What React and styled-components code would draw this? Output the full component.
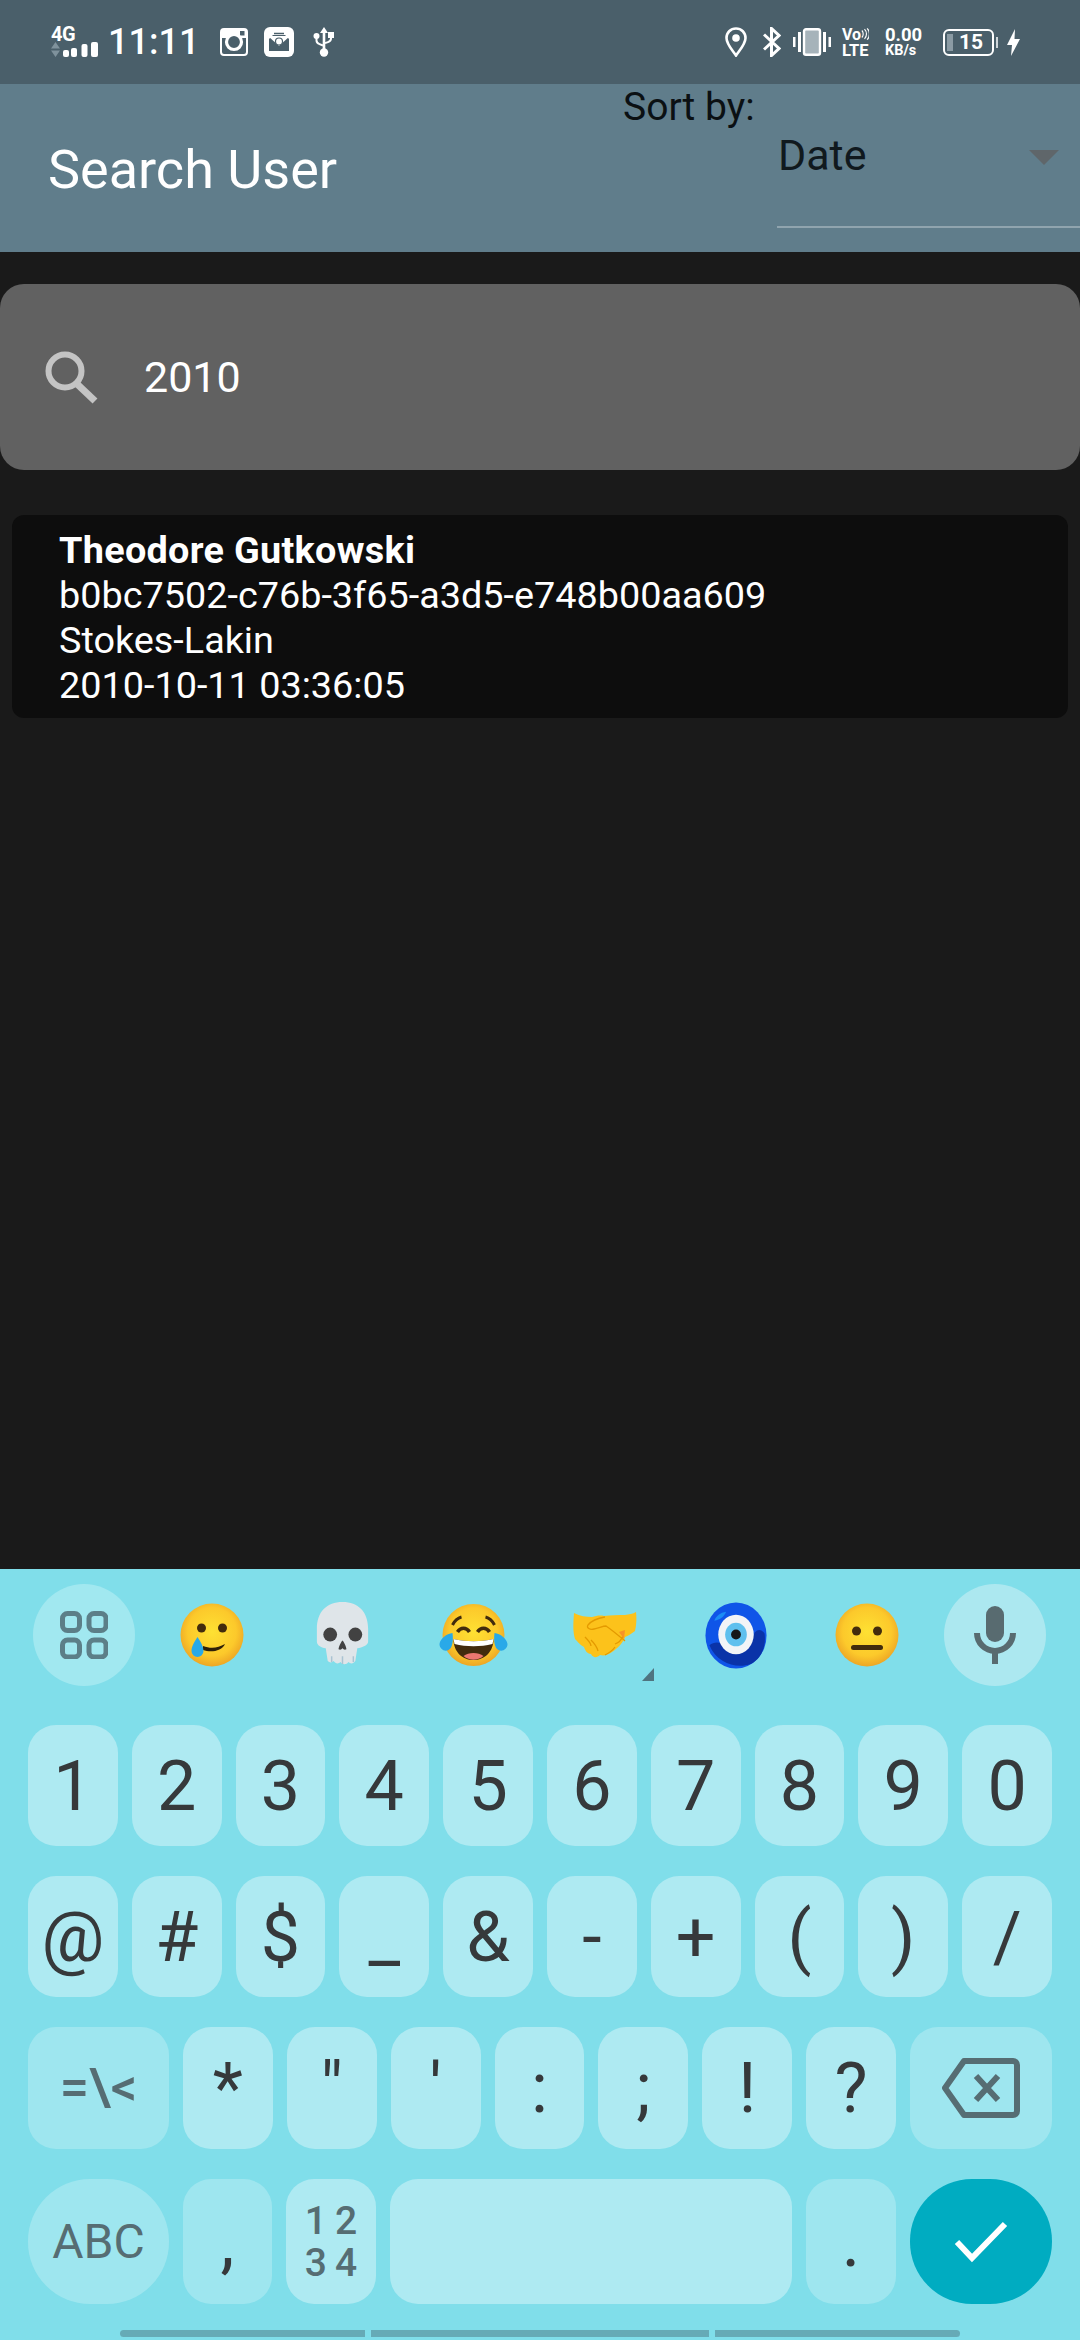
import React from "react";
import styled, { createGlobalStyle } from "styled-components";

const GlobalStyle = createGlobalStyle`
  html, body {
    margin: 0;
    padding: 0;
    background: #1a1a1a;
  }
  body {
    font-family: Roboto, "Liberation Sans", sans-serif;
  }
`;

const Page = styled.div`
  width: 1080px;
  height: 2340px;
  display: flex;
  flex-direction: column;
  overflow: hidden;
  background: #1a1a1a;
`;

const StatusBar = styled.div`
  height: 84px;
  flex-shrink: 0;
  display: flex;
  align-items: center;
  justify-content: space-between;
  padding: 0 60px 0 51px;
  background: #4a5f6a;
  color: #fff;
`;

const StatusGroup = styled.div`
  display: flex;
  align-items: center;
  height: 30px;
`;

const Network = styled.div`
  width: 47px;
  height: 30px;
  display: flex;
  flex-direction: column;
`;

const NetworkLabel = styled.span`
  font-size: 20px;
  line-height: 15px;
  font-weight: 700;
  letter-spacing: -0.5px;
`;

const Clock = styled.span`
  font-size: 36px;
  line-height: 30px;
  font-weight: 500;
  margin: 0 21px 0 10px;
`;

const StatusIcon = styled.svg`
  display: block;
  flex-shrink: 0;
  margin-right: ${(p) => p.$gap || 0}px;
`;

const StackedText = styled.div`
  width: ${(p) => p.$width}px;
  flex-shrink: 0;
  display: flex;
  flex-direction: column;
  font-weight: 700;
  margin-right: ${(p) => p.$gap || 0}px;
`;

const StackedLine = styled.span`
  display: flex;
  align-items: flex-start;
  font-size: ${(p) => p.$size}px;
  line-height: ${(p) => p.$line}px;
`;

const Battery = styled.div`
  position: relative;
  width: 51px;
  height: 27px;
  box-sizing: border-box;
  border: 2px solid #fff;
  border-radius: 6px;
  display: flex;
  align-items: center;
  padding-left: 2px;
  margin-right: 13px;
  &::after {
    content: "";
    position: absolute;
    right: -6px;
    top: 6px;
    width: 2px;
    height: 11px;
    background: #cfd6da;
  }
`;

const BatteryFill = styled.div`
  width: 6px;
  height: 17px;
  background: #8b9ba4;
  margin-right: 6px;
`;

const BatteryText = styled.span`
  font-size: 21px;
  font-weight: 700;
  line-height: 23px;
`;

const AppBar = styled.div`
  height: 168px;
  flex-shrink: 0;
  display: flex;
  justify-content: space-between;
  background: #607d8b;
`;

const Title = styled.h1`
  margin: 4px 0 0 48px;
  align-self: center;
  font-size: 54px;
  line-height: 60px;
  font-weight: 400;
  color: #fff;
`;

const SortBlock = styled.div`
  width: 457px;
  display: flex;
  flex-direction: column;
`;

const SortLabel = styled.span`
  font-size: 39px;
  line-height: 44px;
  margin-top: 1px;
  color: #0b1013;
`;

const Dropdown = styled.div`
  align-self: flex-end;
  width: 303px;
  height: 99px;
  box-sizing: border-box;
  padding: 0 21px 45px 1px;
  display: flex;
  align-items: center;
  justify-content: space-between;
  border-bottom: 2px solid #90a4ae;
`;

const DropdownValue = styled.span`
  font-size: 43px;
  line-height: 50px;
  color: #10191e;
`;

const DropdownArrow = styled.span`
  width: 0;
  height: 0;
  margin-top: 4px;
  border-left: 15px solid transparent;
  border-right: 15px solid transparent;
  border-top: 15px solid #5f666a;
`;

const Content = styled.main`
  flex: 1;
  padding-top: 32px;
`;

const SearchBar = styled.div`
  height: 186px;
  display: flex;
  align-items: center;
  gap: 46px;
  padding-left: 44px;
  border-radius: 24px;
  background: #616161;
`;

const SearchText = styled.span`
  font-size: 43px;
  line-height: 50px;
  color: #fff;
`;

const ResultCard = styled.div`
  margin: 45px 12px 0;
  padding: 13px 47px 10px;
  border-radius: 12px;
  background: #0d0d0d;
  color: #fff;
  font-size: 37.800px;
  line-height: 45px;
`;

const ResultName = styled.div`
  font-weight: 700;
  letter-spacing: 0.3px;
`;

const Keyboard = styled.div`
  height: 771px;
  flex-shrink: 0;
  box-sizing: border-box;
  padding-top: 15px;
  background: #80deea;
`;

const Suggestions = styled.div`
  display: flex;
  align-items: center;
  height: 102px;
  padding-left: 33px;
  margin-bottom: 39px;
`;

const RoundButton = styled.div`
  width: 102px;
  height: 102px;
  flex-shrink: 0;
  border-radius: 50%;
  display: flex;
  align-items: center;
  justify-content: center;
  background: ${(p) => p.$bg};
  margin-left: ${(p) => p.$left || 0}px;
`;

const EmojiCell = styled.div`
  position: relative;
  width: 131px;
  display: flex;
  justify-content: center;
  flex-shrink: 0;
  margin-left: ${(p) => p.$left || 0}px;
`;

const MoreMark = styled.span`
  position: absolute;
  right: 16px;
  bottom: -23px;
  width: 0;
  height: 0;
  border-bottom: 13px solid #4f7480;
  border-left: 12px solid transparent;
`;

const KeyRow = styled.div`
  display: grid;
  grid-template-columns: ${(p) => p.$columns};
  gap: 14px;
  height: ${(p) => p.$height}px;
  padding: 0 28px;
  margin-bottom: 30px;
`;

const Key = styled.div`
  display: flex;
  align-items: center;
  justify-content: center;
  border-radius: 28px;
  background: ${(p) => p.$bg || "#aeeaf2"};
  color: #36393b;
  font-size: 70px;
  font-weight: 400;
  line-height: 1;
`;

const LabelKey = styled(Key)`
  color: #566d73;
  font-size: ${(p) => p.$size}px;
  font-weight: ${(p) => p.$weight || 500};
  border-radius: ${(p) => p.$radius || 28}px;
  text-align: center;
  line-height: ${(p) => p.$line || "1"};
  letter-spacing: ${(p) => p.$spacing || 0}px;
  padding-left: ${(p) => p.$spacing || 0}px;
`;

const ActionKey = styled(Key)`
  border-radius: 62px;
  background: #00acc1;
`;

const GestureBar = styled.div`
  display: flex;
  gap: 6px;
  height: 7px;
  padding: 0 120px;
  margin-top: -4px;
`;

const GestureSegment = styled.span`
  flex: ${(p) => p.$flex};
  background: #66aab6;
  border-radius: ${(p) => p.$radius};
`;

const digits = ["1", "2", "3", "4", "5", "6", "7", "8", "9", "0"];
const symbols = ["@", "#", "$", "_", "&", "-", "+", "(", ")", "/"];
const punctuation = ["*", '"', "'", ":", ";", "!", "?"];

const SmileyBase = ({ id, children }) => (
  <svg width="64" height="64" viewBox="0 0 64 64">
    <defs>
      <radialGradient id={id} cx="50%" cy="45%" r="55%">
        <stop offset="0%" stopColor="#fee133" />
        <stop offset="70%" stopColor="#fcc92b" />
        <stop offset="100%" stopColor="#eda625" />
      </radialGradient>
    </defs>
    <circle cx="32" cy="32" r="31.500" fill={`url(#${id})`} />
    {children}
  </svg>
);

const App = () => (
  <Page>
    <GlobalStyle />
    <StatusBar>
      <StatusGroup>
        <Network>
          <NetworkLabel>4G</NetworkLabel>
          <svg width="47" height="15" viewBox="0 0 47 15">
            <path d="M0 6.500 4.500 0 9 6.500zM0 8.500h9L4.500 15z" fill="#7f929c" />
            <rect x="12" y="8" width="6" height="7" rx="2" fill="#fff" />
            <rect x="20" y="6" width="6" height="9" rx="2" fill="#fff" />
            <rect x="30.500" y="2" width="6" height="13" rx="2" fill="#fff" />
            <rect x="40" y="0" width="7" height="15" rx="2" fill="#fff" />
          </svg>
        </Network>
        <Clock>11:11</Clock>
        <StatusIcon width="28" height="28" viewBox="0 0 28 28" $gap={16}>
          <rect x="1" y="1" width="26" height="26" rx="3" fill="#4a5f6a" stroke="#fff" strokeWidth="2" />
          <path d="M2 2h24v8h-6a9 9 0 0 0-12 0H2z" fill="#fff" />
          <rect x="20" y="3" width="4.500" height="4.500" fill="#4a5f6a" />
          <circle cx="14" cy="14" r="7.500" fill="none" stroke="#fff" strokeWidth="3.200" />
        </StatusIcon>
        <StatusIcon width="30" height="30" viewBox="0 0 30 30" $gap={19}>
          <rect width="30" height="30" rx="6" fill="#fff" />
          <path d="M5 12 9 8h12l4 4v12H5z" fill="#4a5f6a" />
          <path d="M4 9h22L15 19z" fill="#fff" />
          <path d="M10 6.500h10" stroke="#4a5f6a" strokeWidth="1.500" />
          <circle cx="15" cy="14.500" r="3.500" fill="#fff" stroke="#4a5f6a" strokeWidth="1.200" />
        </StatusIcon>
        <StatusIcon width="22" height="30" viewBox="0 0 22 30">
          <path d="M11 0 7 6h2.700v16h2.600V6H15z" fill="#fff" />
          <path d="M3.500 9v4.500c0 2 1.200 3 3 3.600l3.500 1.400M18 8v3.500c0 2-1.200 3-3 3.600l-3 1" stroke="#fff" strokeWidth="2" fill="none" />
          <circle cx="3.500" cy="9" r="3" fill="#fff" />
          <rect x="15" y="5" width="6" height="6" fill="#fff" />
          <circle cx="11" cy="25.500" r="4.200" fill="#fff" />
        </StatusIcon>
      </StatusGroup>
      <StatusGroup>
        <StatusIcon width="22" height="30" viewBox="0 0 22 30" $gap={16}>
          <path d="M11 1.500C5.500 1.500 1.500 5.700 1.500 11c0 6.500 7 13.500 9.500 17.500 2.500-4 9.500-11 9.500-17.500 0-5.300-4-9.500-9.500-9.500z" fill="none" stroke="#fff" strokeWidth="2.600" />
          <circle cx="11" cy="11" r="3.800" fill="#fff" />
        </StatusIcon>
        <StatusIcon width="18" height="30" viewBox="0 0 18 30" $gap={12}>
          <path d="M1 7.500 16 21.500 8.500 28.500V1.500L16 8.500 1 22.500" fill="none" stroke="#fff" strokeWidth="3" />
        </StatusIcon>
        <StatusIcon width="38" height="28" viewBox="0 0 38 28" $gap={11}>
          <rect x="0" y="9" width="2.500" height="10" fill="#fff" />
          <rect x="5" y="4" width="3" height="20" fill="#fff" />
          <rect x="30" y="4" width="3" height="20" fill="#fff" />
          <rect x="35.500" y="9" width="2.500" height="10" fill="#fff" />
          <rect x="11" y="1.200" width="16" height="25.600" rx="2" fill="#a6b3ba" stroke="#fff" strokeWidth="2.400" />
        </StatusIcon>
        <StackedText $width={27} $gap={16}>
          <StackedLine $size={16} $line={16}>
            Vo
            <svg width="9" height="14" viewBox="0 0 9 14" fill="none" stroke="#fff" strokeWidth="1.300">
              <path d="M1 3c2 2 2 6 0 8M4 1.500c3 3 3 8 0 11M7 .500c3.500 3.500 3.500 9.500 0 13" />
            </svg>
          </StackedLine>
          <StackedLine $size={16.500} $line={15}>LTE</StackedLine>
        </StackedText>
        <StackedText $width={35} $gap={23}>
          <StackedLine $size={18.500} $line={17}>0.00</StackedLine>
          <StackedLine $size={14.500} $line={13}>KB/s</StackedLine>
        </StackedText>
        <Battery>
          <BatteryFill />
          <BatteryText>15</BatteryText>
        </Battery>
        <StatusIcon width="13" height="27" viewBox="0 0 13 27">
          <path d="M8 0 0 16h5L4 27l9-17H7.500z" fill="#fff" />
        </StatusIcon>
      </StatusGroup>
    </StatusBar>

    <AppBar>
      <Title>Search User</Title>
      <SortBlock>
        <SortLabel>Sort by:</SortLabel>
        <Dropdown>
          <DropdownValue>Date</DropdownValue>
          <DropdownArrow />
        </Dropdown>
      </SortBlock>
    </AppBar>

    <Content>
      <SearchBar>
        <svg width="54" height="54" viewBox="0 0 54 54">
          <circle cx="21" cy="21" r="16.500" fill="none" stroke="#c4c4c4" strokeWidth="6" />
          <path d="M32 33 51 51" stroke="#c4c4c4" strokeWidth="7" />
        </svg>
        <SearchText>2010</SearchText>
      </SearchBar>
      <ResultCard>
        <ResultName>Theodore Gutkowski</ResultName>
        <div>b0bc7502-c76b-3f65-a3d5-e748b00aa609</div>
        <div>Stokes-Lakin</div>
        <div>2010-10-11 03:36:05</div>
      </ResultCard>
    </Content>

    <Keyboard>
      <Suggestions>
        <RoundButton $bg="#a1e8f0">
          <svg width="48" height="48" viewBox="0 0 48 48" fill="none" stroke="#5c7f88" strokeWidth="5">
            <rect x="2.500" y="2.500" width="17" height="17" rx="5" />
            <rect x="29" y="2.500" width="17" height="17" rx="5" />
            <rect x="2.500" y="29" width="17" height="17" rx="5" />
            <rect x="29" y="29" width="17" height="17" rx="5" />
          </svg>
        </RoundButton>
        <EmojiCell $left={11}>
          <SmileyBase id="tearFace">
            <circle cx="21.500" cy="25" r="4.500" fill="#422b0d" />
            <circle cx="42.500" cy="25" r="4.500" fill="#422b0d" />
            <path d="M23 43c8 3 15 2 22-2-3 7-14 9-22 6z" fill="#2f2008" />
            <path d="M17.500 34c3 5 6 9 6 14a6 6 0 0 1-12 0c0-5 3-9 6-14z" fill="#29a9e8" />
          </SmileyBase>
        </EmojiCell>
        <EmojiCell>
          <svg width="55" height="67" viewBox="0 0 54 68">
            <path d="M27 0C11 0 1 10 1 27v13c0 4 4 6 9 7l2 13c2 2 4 2 6 0 2 3 5 3 7 1 2 3 6 3 8 0 2 2 5 2 7-1l2-13c5-1 11-3 11-7V27C53 10 43 0 27 0z" fill="#dfe5e9" />
            <circle cx="14.500" cy="33" r="7" fill="#424242" />
            <circle cx="40" cy="33" r="7" fill="#424242" />
            <path d="M27 39c-2 2-4 7-4 9 2 1 3 0 4-1 1 1 2 2 4 1 0-2-2-7-4-9z" fill="#424242" />
            <path d="M16 55v6M27 55v8M38 55v6" stroke="#aac3d2" strokeWidth="1.500" />
          </svg>
        </EmojiCell>
        <EmojiCell>
          <svg width="69" height="64" viewBox="0 0 68 64">
            <defs>
              <radialGradient id="joyFace" cx="50%" cy="45%" r="55%">
                <stop offset="0%" stopColor="#fee133" />
                <stop offset="70%" stopColor="#fcc92b" />
                <stop offset="100%" stopColor="#eda625" />
              </radialGradient>
            </defs>
            <circle cx="34" cy="32" r="31" fill="url(#joyFace)" />
            <path d="M13 22c2-4 5-7 9-8M55 22c-2-4-5-7-9-8" stroke="#422b0d" strokeWidth="3" fill="none" />
            <path d="M18 29c3-5 9-5 12 0M38 29c3-5 9-5 12 0" stroke="#422b0d" strokeWidth="3.500" fill="none" />
            <path d="M14 36c13 3 27 3 40 0 0 13-9 21-20 21s-20-8-20-21z" fill="#422b0d" />
            <path d="M14 36c13 3 27 3 40 0l-1 5c-12 3-26 3-38 0z" fill="#fff" />
            <path d="M24 53c5-4 15-4 20 0-6 5-14 5-20 0z" fill="#ed7770" />
            <path d="M13 30c-6 1-12 5-13 11 0 5 5 8 9 6 4-2 5-9 4-17zM55 30c6 1 12 5 13 11 0 5-5 8-9 6-4-2-5-9-4-17z" fill="#29a9e8" />
          </svg>
        </EmojiCell>
        <EmojiCell>
          <svg width="66" height="46" viewBox="0 0 64 46">
            <path d="M1 1c6 3 12 4 18 4 4-1 8-2 12-1 7-1 14-1 21-1 4-1 8-1 11-3 1 8 0 15-1 19-3 2-7 5-10 6-2 6-7 11-13 15-4 3-8 4-12 3-3 3-7 3-9-1-4 0-6-4-7-7-4-2-7-6-9-8-2-7-2-14-1-26z" fill="#fcc21b" />
            <path d="M32 5c-6 1-13 3-17 8-2 3 2 5 6 4 5-1 9-3 12-3 6 4 13 10 19 15M12 25c3 3 6 7 6 9M18 28c3 3 6 7 7 11M32 43c4-2 8-5 10-8M42 32c3-1 6-3 8-8" fill="none" stroke="#e49a00" strokeWidth="1.300" />
            <path d="M46 20l6-2-1 9z" fill="#f79329" />
          </svg>
          <MoreMark />
        </EmojiCell>
        <EmojiCell>
          <svg width="64" height="67" viewBox="0 0 62 68">
            <ellipse cx="31" cy="34" rx="31" ry="33.500" fill="#0f55e8" />
            <path d="M4 44c6-5 14-3 20 3 8 4 20 0 26-16 4-5 8-2 10 1 2 14-4 26-14 31-14 5-34 0-42-19z" fill="#0a33a8" />
            <path d="M9 19c2-5 6-8 12-9-2 5-6 8-12 9z" fill="#1a8cf5" />
            <ellipse cx="31" cy="33" rx="18" ry="20" fill="#f2f4f7" />
            <ellipse cx="31" cy="33" rx="11" ry="12" fill="#5fc0ee" />
            <circle cx="31" cy="33" r="5" fill="#161616" />
          </svg>
        </EmojiCell>
        <EmojiCell>
          <SmileyBase id="neutralFace">
            <circle cx="21.500" cy="28" r="4.500" fill="#422b0d" />
            <circle cx="42.500" cy="28" r="4.500" fill="#422b0d" />
            <rect x="16" y="42" width="32" height="5" rx="2.500" fill="#422b0d" />
          </SmileyBase>
        </EmojiCell>
        <RoundButton $bg="#ace8f0" $left={12}>
          <svg width="42" height="58" viewBox="0 0 42 58">
            <rect x="12" y="0" width="18" height="36" rx="9" fill="#586b70" />
            <path d="M3 27a18 18 0 0 0 36 0" fill="none" stroke="#586b70" strokeWidth="6" />
            <rect x="18" y="44" width="6" height="14" fill="#586b70" />
          </svg>
        </RoundButton>
      </Suggestions>

      <KeyRow $columns="repeat(10, 1fr)" $height={121}>
        {digits.map((d) => <Key key={d}>{d}</Key>)}
      </KeyRow>
      <KeyRow $columns="repeat(10, 1fr)" $height={121}>
        {symbols.map((s) => <Key key={s}>{s}</Key>)}
      </KeyRow>
      <KeyRow $columns="141px repeat(7, 1fr) 142px" $height={122}>
        <LabelKey $bg="#9ee6ef" $size={52}>{"=\\<"}</LabelKey>
        {punctuation.map((p) => <Key key={p}>{p}</Key>)}
        <Key $bg="#9ee6ef">
          <svg width="78" height="60" viewBox="0 0 78 60" fill="none" stroke="#566d73" strokeWidth="6">
            <path d="M22 3h49a4 4 0 0 1 4 4v46a4 4 0 0 1-4 4H22L3 30z" strokeLinejoin="round" />
            <path d="M34 18 56 42M56 18 34 42" />
          </svg>
        </Key>
      </KeyRow>
      <KeyRow $columns="141px 89px 90px 1fr 90px 142px" $height={125}>
        <LabelKey $bg="#9ee6ef" $size={48} $weight={400} $radius={62}>ABC</LabelKey>
        <Key $bg="#9ee6ef">,</Key>
        <LabelKey $size={39} $line="42px" $spacing={8}>12<br />34</LabelKey>
        <Key />
        <Key $bg="#9ee6ef">.</Key>
        <ActionKey>
          <svg width="54" height="42" viewBox="0 0 54 42" fill="none" stroke="#fff" strokeWidth="6">
            <path d="M3 21 18 37 51 3" />
          </svg>
        </ActionKey>
      </KeyRow>
      <GestureBar>
        <GestureSegment $flex={245} $radius="4px 0 0 4px" />
        <GestureSegment $flex={338} $radius="0" />
        <GestureSegment $flex={245} $radius="0 4px 4px 0" />
      </GestureBar>
    </Keyboard>
  </Page>
);

export default App;
